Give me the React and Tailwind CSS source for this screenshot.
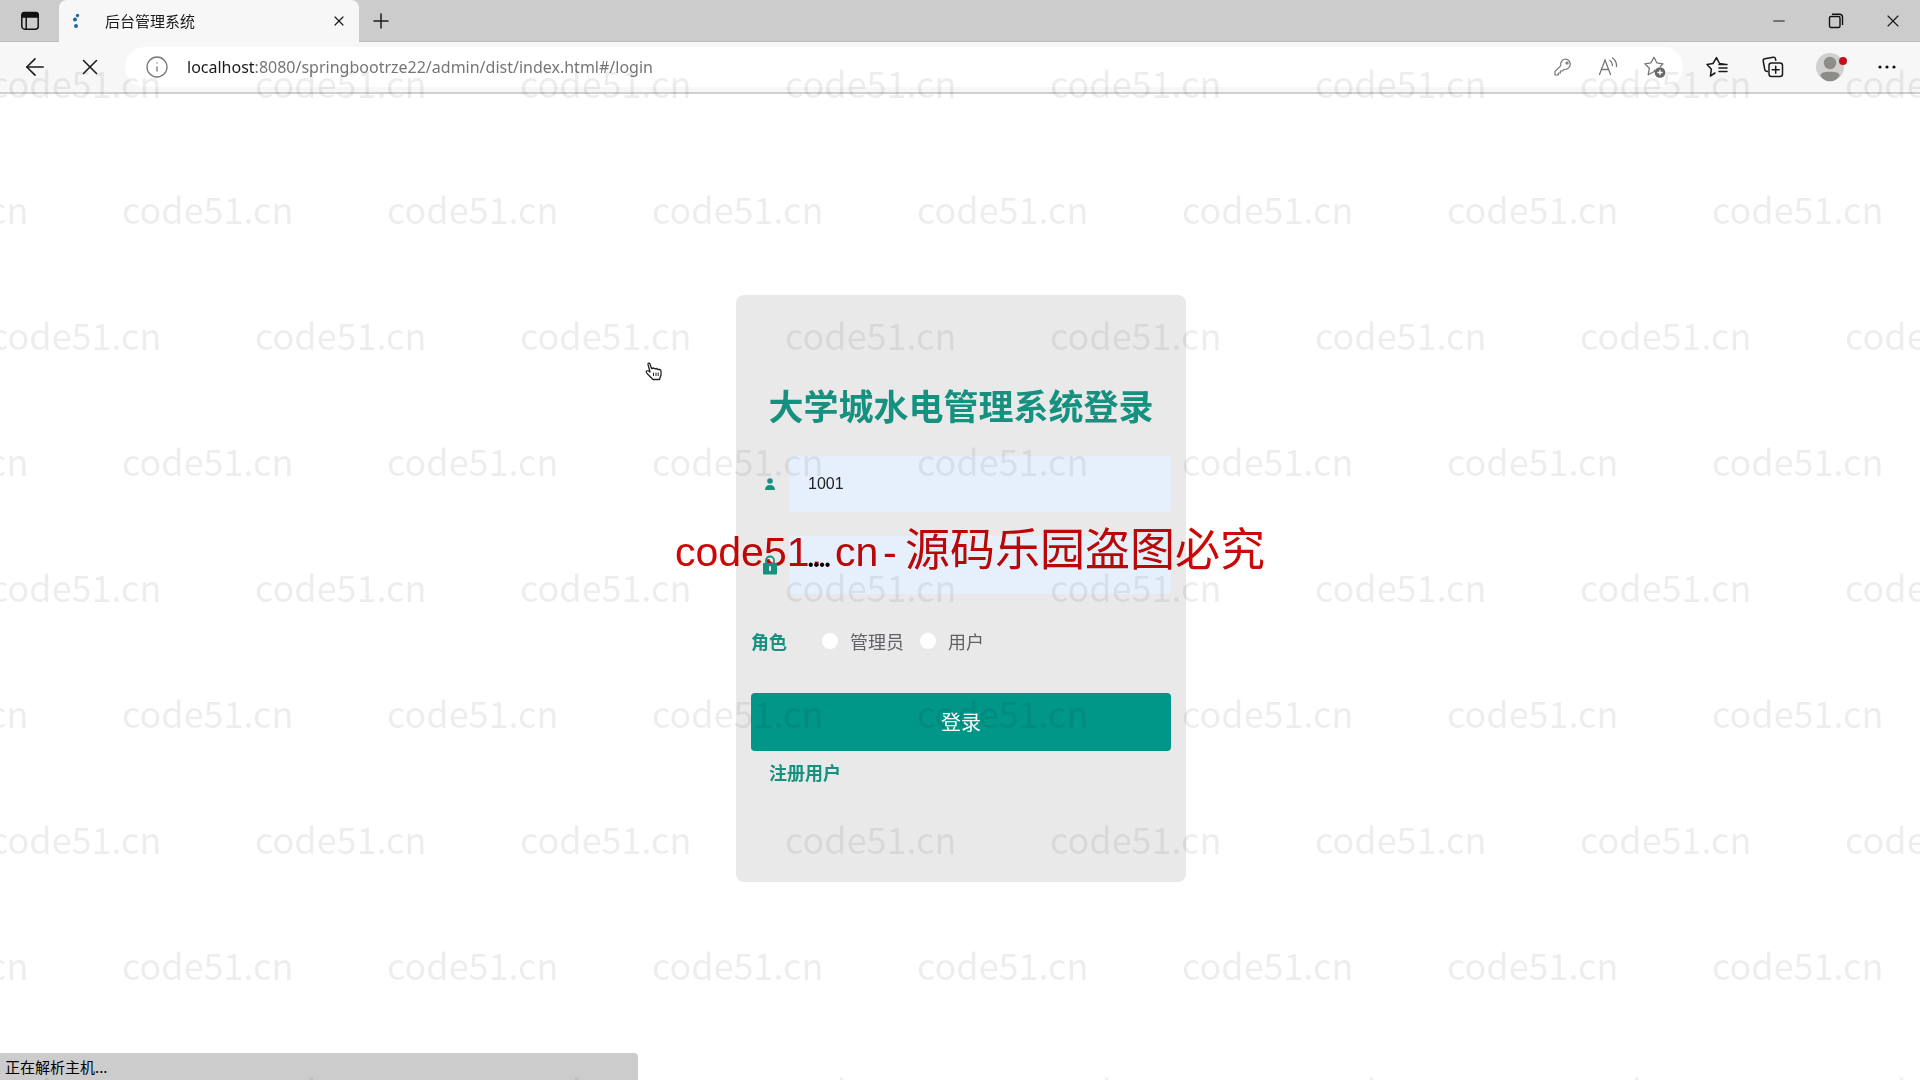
import React, { useState } from 'react';
import { Minus, Plus, X, ArrowLeft, Info } from 'lucide-react';

const WATERMARK_ROWS = [0, 1, 2, 3, 4, 5, 6, 7, 8];
const WATERMARK_COLS = [0, 1, 2, 3, 4, 5, 6, 7];

const TabActionsIcon = () => (
    <svg className="w-5 h-5" viewBox="0 0 20 20" fill="none" stroke="#111" strokeWidth="1.5">
        <rect x="1.8" y="1.8" width="16.4" height="16.4" rx="3" />
        <path d="M2 3.5a2 2 0 0 1 2-2h12a2 2 0 0 1 2 2V6H2z" fill="#111" />
        <path d="M6.2 6v12" />
    </svg>
);

const RestoreIcon = () => (
    <svg className="w-4 h-4" viewBox="0 0 16 16" fill="none" stroke="#111" strokeWidth="1.4">
        <rect x="1.5" y="3.5" width="10.5" height="11" rx="1.5" />
        <path d="M4 1.3h7.5a3 3 0 0 1 3 3V12" />
    </svg>
);

const KeyIcon = () => (
    <svg className="w-5 h-5" viewBox="0 0 20 20" fill="none" stroke="#767676" strokeWidth="1.2" strokeLinejoin="round">
        <path d="M12.8 2a5.2 5.2 0 0 0-5 6.6L2 14.4V18h3.4v-2h2v-2h2l1.6-1.6A5.2 5.2 0 1 0 12.8 2z" />
        <circle cx="14" cy="6" r="1" />
    </svg>
);

const ReadAloudIcon = () => (
    <svg className="w-5 h-5" viewBox="0 0 20 20" fill="none" stroke="#767676" strokeWidth="1.3" strokeLinecap="round">
        <path d="M1.5 17.5 7 3l5.5 14.5M3.5 12.5h7" />
        <path d="M12 3.5a6 6 0 0 1 2.5 5M14.5 1a9.5 9.5 0 0 1 4 8.5" />
    </svg>
);

const AddFavoriteIcon = () => (
    <svg className="w-6 h-6" viewBox="0 0 24 24" fill="none">
        <path d="M12 14.5l-.8 2-6 3.2 1.2-6.4L1.8 8.8l6.2-1L11 2.2l2.8 5.6 6.2 1-3 3" stroke="#767676" strokeWidth="1.3" strokeLinejoin="round" />
        <circle cx="17" cy="17.5" r="5.3" fill="#666" />
        <path d="M17 14.8v5.4M14.3 17.5h5.4" stroke="#fff" strokeWidth="1.3" />
    </svg>
);

const FavoritesIcon = () => (
    <svg className="w-6 h-6" viewBox="0 0 24 24" fill="none" stroke="#1b1b1b" strokeWidth="1.5" strokeLinecap="round" strokeLinejoin="round">
        <path d="M10 18l-4.6 3 1-6.8L2 9.5l6-1L11.5 2.6l3 5.9 6.5 1M14 13h8M14 9.5h8M14 16.5h8" />
    </svg>
);

const CollectionsIcon = () => (
    <svg className="w-6 h-6" viewBox="0 0 24 24" fill="none" stroke="#1b1b1b" strokeWidth="1.5" strokeLinecap="round" strokeLinejoin="round">
        <path d="M6.5 16.5 4.8 16a2 2 0 0 1-1-1.4L2.2 6a2 2 0 0 1 1.6-2.2l8.4-1.6a2 2 0 0 1 2.3 1.6l.3 1.5" />
        <rect x="8" y="8" width="13.5" height="13.5" rx="2.5" />
        <path d="M14.7 11.2v7M11.2 14.7h7" />
    </svg>
);

const AvatarIcon = () => (
    <svg className="w-8 h-8" viewBox="0 0 32 32">
        <circle cx="15" cy="16" r="14" fill="#d2d0ce" />
        <circle cx="15" cy="12" r="6.2" fill="#8c8c88" />
        <path d="M5.5 24.5c0-3 4-3.8 9.5-3.8s9.5.8 9.5 3.8c-2 3.6-5.5 5.8-9.5 5.8s-7.5-2.2-9.5-5.8z" fill="#8c8c88" />
        <circle cx="28" cy="10" r="4" fill="#c50f1f" />
    </svg>
);

const UserIcon = () => (
    <svg className="w-3 h-3" viewBox="0 0 12 12" fill="#16917f">
        <circle cx="6" cy="3" r="2.8" />
        <path d="M1 12c0-3.4 2-5 5-5s5 1.6 5 5z" />
    </svg>
);

const LockIcon = () => (
    <svg className="w-4 h-5" viewBox="0 0 16 20">
        <path d="M4 9V5.5a4 4 0 0 1 8 0V9" fill="none" stroke="#16917f" strokeWidth="1.8" />
        <rect x="1" y="8" width="14" height="11.5" rx="1" fill="#16917f" />
        <rect x="7" y="11" width="2" height="5" rx="1" fill="#fff" />
    </svg>
);

const HandCursor = () => (
    <svg className="absolute left-[644px] top-[361px] w-5 h-5" viewBox="0 0 20 20" fill="#fff" stroke="#222" strokeWidth="1.3" strokeLinejoin="round">
        <path d="M6 11 4 3.5C3.7 2 5.5 1.5 6 3l1.5 4.5 2-.5 1.2.8 2-.3 1 1 2-.2c1 .2 1.3 1 1.3 2V14l-1.500 4.500H9L4 13.500c-1.200-1.500-2.500-2.500-1.700-3.300S5 10 6 11z" />
        <path d="M9.5 11.5v3.5M12 11.5v3.5M14.2 11.5v3.5" strokeWidth="1" />
    </svg>
);

const Watermark = () => (
    <div className="absolute inset-0 pt-[19px] overflow-hidden pointer-events-none select-none font-['Noto_Sans_CJK_SC',sans-serif] text-[36px] leading-[126px] text-black/[0.07]" aria-hidden="true">
        {WATERMARK_ROWS.map(row => (
            <div key={row} className={`flex ${row % 2 ? '-ml-[143px]' : '-ml-[10px]'}`}>
                {WATERMARK_COLS.map(col => (
                    <span key={col} className="w-[265px] shrink-0">code51.cn</span>
                ))}
            </div>
        ))}
    </div>
);

const BrowserHeader = () => (
    <header className="text-[#1b1b1b]">
        <div className="flex items-stretch h-[42px] bg-[#cccccc] border-b border-[#bdbdbd]">
            <button className="w-[59px] flex items-center justify-center" aria-label="标签页操作"><TabActionsIcon /></button>
            <div className="w-[300px] h-[42px] px-3 flex items-center rounded-t-lg bg-[#f7f7f7]">
                <svg className="w-3 h-4" viewBox="0 0 12 16" fill="#22699b">
                    <circle cx="6.5" cy="2.5" r="1.7" />
                    <circle cx="4" cy="6.5" r="2" />
                    <circle cx="5" cy="13" r="2" />
                </svg>
                <span className="ml-[22px] flex-1 text-[15px] leading-5">后台管理系统</span>
                <button aria-label="关闭标签页"><X className="w-4 h-4" strokeWidth={1.8} /></button>
            </div>
            <button className="w-11 flex items-center justify-center" aria-label="新建标签页"><Plus className="w-6 h-6" strokeWidth={1.5} /></button>
            <div className="flex-1" />
            <button className="w-14 flex items-center justify-center" aria-label="最小化"><Minus className="w-[18px] h-[18px]" strokeWidth={1.6} /></button>
            <button className="w-[58px] flex items-center justify-center" aria-label="还原"><RestoreIcon /></button>
            <button className="w-[55px] flex items-center justify-center" aria-label="关闭"><X className="w-5 h-5" strokeWidth={1.4} /></button>
        </div>
        <div className="flex items-center h-[52px] bg-[#f7f7f7] border-b-2 border-[#d0d0d0]">
            <button className="w-[70px] flex items-center justify-center" aria-label="返回"><ArrowLeft className="w-7 h-7" strokeWidth={1.4} /></button>
            <button className="w-10 flex items-center justify-center" aria-label="停止"><X className="w-[26px] h-[26px]" strokeWidth={1.4} /></button>
            <div className="ml-[15px] flex-1 h-10 pl-[20px] pr-4 flex items-center gap-[18px] rounded-full bg-white text-[#767676]">
                <Info className="w-6 h-6" strokeWidth={1.3} />
                <div className="flex-1 font-['Noto_Sans',sans-serif] text-[16px] leading-6">
                    <span className="text-[#1b1b1b]">localhost</span>:8080/springbootrze22/admin/dist/index.html#/login
                </div>
                <div className="flex items-center gap-[25px]">
                    <button aria-label="密码"><KeyIcon /></button>
                    <button aria-label="大声朗读"><ReadAloudIcon /></button>
                    <button aria-label="收藏此页"><AddFavoriteIcon /></button>
                </div>
            </div>
            <div className="pl-[22px] pr-[23px] flex items-center">
                <button aria-label="收藏夹"><FavoritesIcon /></button>
                <button className="ml-8" aria-label="集锦"><CollectionsIcon /></button>
                <button className="ml-[30px]" aria-label="个人资料"><AvatarIcon /></button>
                <button className="ml-[30px]" aria-label="设置及其他">
                    <svg className="w-5 h-5" viewBox="0 0 20 20" fill="#111">
                        <circle cx="3" cy="10" r="1.6" />
                        <circle cx="10" cy="10" r="1.6" />
                        <circle cx="17" cy="10" r="1.6" />
                    </svg>
                </button>
            </div>
        </div>
    </header>
);

const LoginForm = () => {
    const [form, setForm] = useState({ username: '1001', password: '1001', role: '' });

    const update = (field, value) => setForm(prev => ({ ...prev, [field]: value }));

    return (
        <form onSubmit={e => e.preventDefault()} className="w-[450px] px-[15px] pt-[86px] pb-[96px] rounded-lg bg-[#e9e9e9]">
            <h1 className="text-center text-[35px] leading-[48px] font-bold text-[#16917f]">大学城水电管理系统登录</h1>

            <div className="mt-[27px] flex items-center">
                <label htmlFor="username" className="w-[38px] pl-[13px]" aria-label="用户名"><UserIcon /></label>
                <input id="username" type="text" autoComplete="off" className="flex-1 h-14 px-[19px] rounded bg-[#e6f0fd] font-['Liberation_Sans',sans-serif] text-base text-[#222] outline-none"
                    value={form.username} onChange={e => update('username', e.target.value)} />
            </div>
            <div className="mt-6 flex items-center">
                {/* icon stays above the red notice */}
                <label htmlFor="password" className="relative z-10 w-[38px] pl-[11px]" aria-label="密码"><LockIcon /></label>
                <input id="password" type="password" autoComplete="off" className="flex-1 h-[58px] px-[19px] rounded bg-[#e6f0fd] font-['Liberation_Sans',sans-serif] text-base text-black outline-none"
                    value={form.password} onChange={e => update('password', e.target.value)} />
            </div>

            <div className="mt-[31px] flex items-center text-[18px] leading-8 text-[#606266]">
                <span className="w-[71px] font-bold text-[#16917f]">角色</span>
                {['管理员', '用户'].map(role => (
                    <label key={role} className="mr-4 flex items-center gap-3">
                        <input type="radio" name="role" className="appearance-none w-4 h-4 rounded-full bg-white checked:border-4 checked:border-[#009688]"
                            checked={form.role === role} onChange={() => update('role', role)} />
                        {role}
                    </label>
                ))}
            </div>

            <button type="submit" className="mt-9 block w-full h-[58px] rounded bg-[#009688] text-white text-[20px]">登录</button>
            <a href="#/register" className="mt-[7px] ml-[18px] block w-fit text-[18px] leading-7 font-bold text-[#16917f]">注册用户</a>
        </form>
    );
};

const App = () => (
    <div className="relative min-h-screen flex flex-col overflow-hidden bg-white font-['Noto_Sans_CJK_SC',sans-serif]">
        <BrowserHeader />
        <main className="relative flex-1 pt-0.5 pl-0.5 flex items-center justify-center">
            <LoginForm />
            <p className="absolute left-1/2 top-[423px] -ml-[285px] flex items-baseline whitespace-nowrap text-[45px] leading-[60px] text-[#cc0808] mix-blend-multiply pointer-events-none">
                <span className="w-[136px] font-['Liberation_Sans',sans-serif] text-[41px]">code51</span>
                <span className="w-[24px] font-['Liberation_Sans',sans-serif] text-[41px]">.</span>
                <span className="w-[48px] font-['Liberation_Sans',sans-serif] text-[41px]">cn</span>
                <span className="w-[22px] font-['Liberation_Sans',sans-serif] text-[41px]">-</span>
                <span>源码乐园盗图必究</span>
            </p>
        </main>
        <div className="absolute left-0 bottom-0 w-[638px] h-[27px] px-[5px] rounded-tr bg-[#cccccc] text-[15px] leading-[28px] text-black">正在解析主机...</div>
        <HandCursor />
        <Watermark />
    </div>
);

export default App;
